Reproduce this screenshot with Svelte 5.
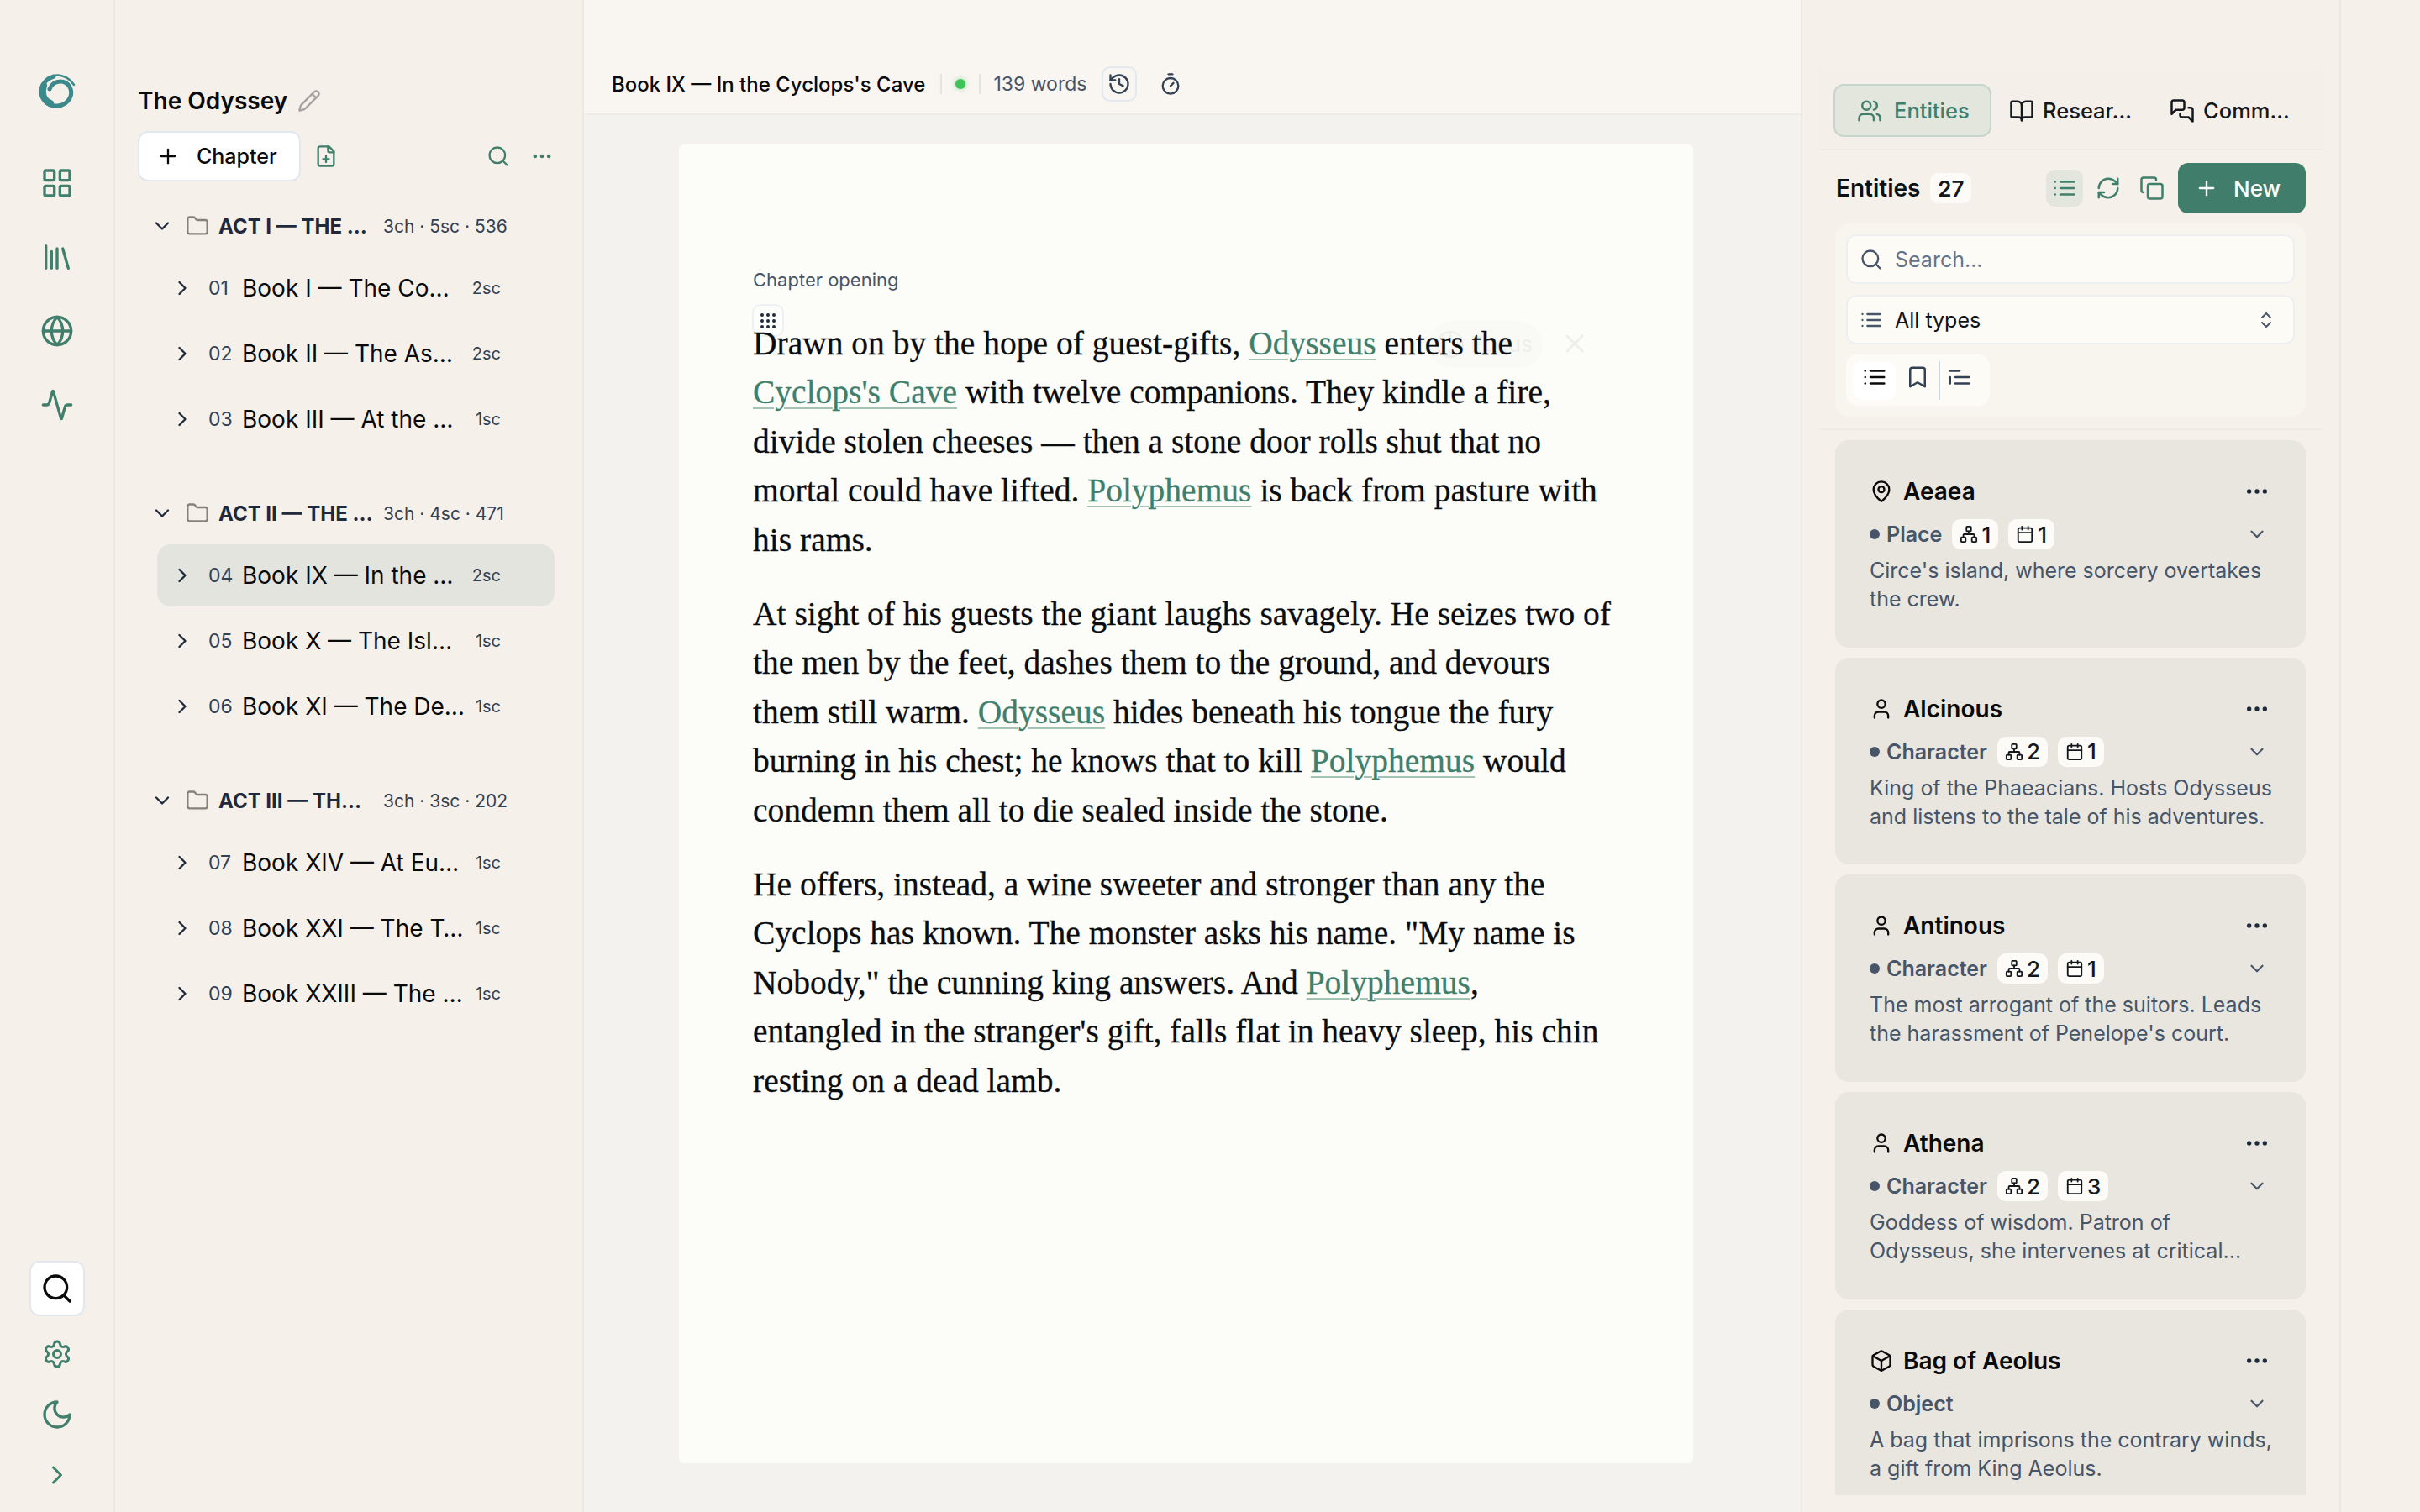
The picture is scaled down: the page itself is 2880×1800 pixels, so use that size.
<script>
  const icons = {
    grid: '<rect x="3" y="3" width="7" height="7" rx="1"/><rect x="14" y="3" width="7" height="7" rx="1"/><rect x="14" y="14" width="7" height="7" rx="1"/><rect x="3" y="14" width="7" height="7" rx="1"/>',
    library: '<path d="m16 6 4 14"/><path d="M12 6v14"/><path d="M8 8v12"/><path d="M4 4v16"/>',
    globe: '<circle cx="12" cy="12" r="10"/><path d="M12 2a14.5 14.5 0 0 0 0 20 14.5 14.5 0 0 0 0-20"/><path d="M2 12h20"/>',
    activity: '<path d="M22 12h-2.48a2 2 0 0 0-1.93 1.46l-2.35 8.36a.25.25 0 0 1-.48 0L9.24 2.18a.25.25 0 0 0-.48 0l-2.35 8.36A2 2 0 0 1 4.49 12H2"/>',
    search: '<circle cx="11" cy="11" r="8"/><path d="m21 21-4.3-4.3"/>',
    settings: '<path d="M9.671 4.136a2.34 2.34 0 0 1 4.659 0 2.34 2.34 0 0 0 3.319 1.915 2.34 2.34 0 0 1 2.33 4.033 2.34 2.34 0 0 0 0 3.831 2.34 2.34 0 0 1-2.33 4.033 2.34 2.34 0 0 0-3.319 1.915 2.34 2.34 0 0 1-4.659 0 2.34 2.34 0 0 0-3.32-1.915 2.34 2.34 0 0 1-2.33-4.033 2.34 2.34 0 0 0 0-3.831A2.34 2.34 0 0 1 6.35 6.051a2.34 2.34 0 0 0 3.319-1.915"/><circle cx="12" cy="12" r="3"/>',
    moon: '<path d="M12 3a6 6 0 0 0 9 9 9 9 0 1 1-9-9Z"/>',
    right: '<path d="m9 18 6-6-6-6"/>',
    down: '<path d="m6 9 6 6 6-6"/>',
    plus: '<path d="M5 12h14"/><path d="M12 5v14"/>',
    pencil: '<path d="M21.174 6.812a1 1 0 0 0-3.986-3.987L3.842 16.174a2 2 0 0 0-.5.83l-1.321 4.352a.5.5 0 0 0 .623.622l4.353-1.32a2 2 0 0 0 .83-.497z"/><path d="m15 5 4 4"/>',
    filePlus: '<path d="M15 2H6a2 2 0 0 0-2 2v16a2 2 0 0 0 2 2h12a2 2 0 0 0 2-2V7Z"/><path d="M14 2v4a2 2 0 0 0 2 2h4"/><path d="M9 15h6"/><path d="M12 18v-6"/>',
    dots: '<circle cx="12" cy="12" r="1"/><circle cx="19" cy="12" r="1"/><circle cx="5" cy="12" r="1"/>',
    folder: '<path d="M20 20a2 2 0 0 0 2-2V8a2 2 0 0 0-2-2h-7.9a2 2 0 0 1-1.69-.9L9.6 3.9A2 2 0 0 0 7.93 3H4a2 2 0 0 0-2 2v13a2 2 0 0 0 2 2Z"/>',
    history: '<path d="M3 12a9 9 0 1 0 9-9 9.75 9.75 0 0 0-6.74 2.74L3 8"/><path d="M3 3v5h5"/><path d="M12 7v5l4 2"/>',
    timer: '<path d="M10 2h4"/><path d="m12 14 3-3"/><circle cx="12" cy="14" r="8"/>',
    grip: '<circle cx="5" cy="5" r="1"/><circle cx="12" cy="5" r="1"/><circle cx="19" cy="5" r="1"/><circle cx="5" cy="12" r="1"/><circle cx="12" cy="12" r="1"/><circle cx="19" cy="12" r="1"/><circle cx="5" cy="19" r="1"/><circle cx="12" cy="19" r="1"/><circle cx="19" cy="19" r="1"/>',
    users: '<path d="M16 21v-2a4 4 0 0 0-4-4H6a4 4 0 0 0-4 4v2"/><circle cx="9" cy="7" r="4"/><path d="M22 21v-2a4 4 0 0 0-3-3.87"/><path d="M16 3.13a4 4 0 0 1 0 7.75"/>',
    book: '<path d="M12 7v14"/><path d="M3 18a1 1 0 0 1-1-1V4a1 1 0 0 1 1-1h5a4 4 0 0 1 4 4 4 4 0 0 1 4-4h5a1 1 0 0 1 1 1v13a1 1 0 0 1-1 1h-6a3 3 0 0 0-3 3 3 3 0 0 0-3-3z"/>',
    messages: '<path d="M14 9a2 2 0 0 1-2 2H6l-4 4V4a2 2 0 0 1 2-2h8a2 2 0 0 1 2 2z"/><path d="M18 9h2a2 2 0 0 1 2 2v11l-4-4h-6a2 2 0 0 1-2-2v-1"/>',
    list: '<path d="M3 12h.01"/><path d="M3 18h.01"/><path d="M3 6h.01"/><path d="M8 12h13"/><path d="M8 18h13"/><path d="M8 6h13"/>',
    refresh: '<path d="M3 12a9 9 0 0 1 9-9 9.75 9.75 0 0 1 6.74 2.74L21 8"/><path d="M21 3v5h-5"/><path d="M21 12a9 9 0 0 1-9 9 9.75 9.75 0 0 1-6.74-2.74L3 16"/><path d="M8 16H3v5"/>',
    copy: '<rect x="8" y="8" width="14" height="14" rx="2"/><path d="M4 16c-1.1 0-2-.9-2-2V4c0-1.1.9-2 2-2h10c1.1 0 2 .9 2 2"/>',
    updown: '<path d="m7 15 5 5 5-5"/><path d="m7 9 5-5 5 5"/>',
    bookmark: '<path d="m19 21-7-4-7 4V5a2 2 0 0 1 2-2h10a2 2 0 0 1 2 2v16z"/>',
    tree: '<path d="M3 6h9"/><path d="M8 12h13"/><path d="M8 18h13"/><path d="M3 12v6"/>',
    pin: '<path d="M20 10c0 4.993-5.539 10.193-7.399 11.799a1 1 0 0 1-1.202 0C9.539 20.193 4 14.993 4 10a8 8 0 0 1 16 0"/><circle cx="12" cy="10" r="3"/>',
    user: '<path d="M19 21v-2a4 4 0 0 0-4-4H9a4 4 0 0 0-4 4v2"/><circle cx="12" cy="7" r="4"/>',
    box: '<path d="M21 8a2 2 0 0 0-1-1.73l-7-4a2 2 0 0 0-2 0l-7 4A2 2 0 0 0 3 8v8a2 2 0 0 0 1 1.73l7 4a2 2 0 0 0 2 0l7-4A2 2 0 0 0 21 16Z"/><path d="m3.3 7 8.7 5 8.7-5"/><path d="M12 22V12"/>',
    network: '<rect x="16" y="16" width="6" height="6" rx="1"/><rect x="2" y="16" width="6" height="6" rx="1"/><rect x="9" y="2" width="6" height="6" rx="1"/><path d="M5 16v-3a1 1 0 0 1 1-1h12a1 1 0 0 1 1 1v3"/><path d="M12 12V8"/>',
    calendar: '<path d="M8 2v4"/><path d="M16 2v4"/><rect x="3" y="4" width="18" height="18" rx="2"/><path d="M3 10h18"/>',
    x: '<path d="M18 6 6 18"/><path d="m6 6 12 12"/>'
  };

  const acts = [
    { name: 'ACT I — THE …', meta: '3ch · 5sc · 536', chapters: [
      ['01', 'Book I — The Co…', '2sc'],
      ['02', 'Book II — The As…', '2sc'],
      ['03', 'Book III — At the …', '1sc']
    ] },
    { name: 'ACT II — THE …', meta: '3ch · 4sc · 471', chapters: [
      ['04', 'Book IX — In the …', '2sc', true],
      ['05', 'Book X — The Isl…', '1sc'],
      ['06', 'Book XI — The De…', '1sc']
    ] },
    { name: 'ACT III — TH…', meta: '3ch · 3sc · 202', chapters: [
      ['07', 'Book XIV — At Eu…', '1sc'],
      ['08', 'Book XXI — The T…', '1sc'],
      ['09', 'Book XXIII — The …', '1sc']
    ] }
  ];

  const entities = [
    { icon: 'pin', name: 'Aeaea', type: 'Place', rel: 1, ev: 1, desc: ["Circe's island, where sorcery overtakes", 'the crew.'] },
    { icon: 'user', name: 'Alcinous', type: 'Character', rel: 2, ev: 1, desc: ['King of the Phaeacians. Hosts Odysseus', 'and listens to the tale of his adventures.'] },
    { icon: 'user', name: 'Antinous', type: 'Character', rel: 2, ev: 1, desc: ['The most arrogant of the suitors. Leads', "the harassment of Penelope's court."] },
    { icon: 'user', name: 'Athena', type: 'Character', rel: 2, ev: 3, desc: ['Goddess of wisdom. Patron of', 'Odysseus, she intervenes at critical…'] },
    { icon: 'box', name: 'Bag of Aeolus', type: 'Object', desc: ['A bag that imprisons the contrary winds,', 'a gift from King Aeolus.'] }
  ];
</script>

{#snippet icon(name, size = 40)}
  <svg class="ic" width={size} height={size} viewBox="0 0 24 24" fill="none" stroke="currentColor" stroke-width="2" stroke-linecap="round" stroke-linejoin="round">{@html icons[name]}</svg>
{/snippet}

<div class="app">
  <nav class="rail">
    <svg class="logo" width="52" height="52" viewBox="11 12 52 52" fill="none" stroke="#3b898b" stroke-linecap="round">
      <path d="M57 31C50 20 37 17 28 22" stroke-width="2.5"/>
      <path d="M33 21C19 25 14 41 22 50C30 59 46 58 52 47C57 37 50 27 41 27C34 27 30 31 28 36" stroke-width="5"/>
      <path d="M21 32C18 40 20 49 29 53" stroke-width="8"/>
    </svg>
    <div class="rail-top">
      {#each ['grid', 'library', 'globe', 'activity'] as n}
        <span class="rail-btn">{@render icon(n)}</span>
      {/each}
    </div>
    <div class="rail-bottom">
      <span class="rail-search">{@render icon('search')}</span>
      <span class="rail-btn">{@render icon('settings', 36)}</span>
      <span class="rail-btn">{@render icon('moon')}</span>
      <span class="rail-btn">{@render icon('right', 36)}</span>
    </div>
  </nav>

  <aside class="tree-panel">
    <div class="book-title">
      <span>The Odyssey</span>
      <span class="pencil">{@render icon('pencil', 28)}</span>
    </div>
    <div class="tree-tools">
      <button class="add-chapter">{@render icon('plus', 28)}<span>Chapter</span></button>
      <span class="green">{@render icon('filePlus', 28)}</span>
      <span class="spacer"></span>
      <span class="green">{@render icon('search', 28)}</span>
      <span class="green dots">{@render icon('dots', 28)}</span>
    </div>
    {#each acts as act}
      <section class="act">
        <div class="act-row">
          <span class="act-chev">{@render icon('down', 28)}</span>
          <span class="act-folder">{@render icon('folder', 28)}</span>
          <span class="act-name">{act.name}</span>
          <span class="act-meta">{act.meta}</span>
        </div>
        {#each act.chapters as ch}
          <div class="chapter" class:selected={ch[3]}>
            <span class="ch-chev">{@render icon('right', 28)}</span>
            <span class="ch-num">{ch[0]}</span>
            <span class="ch-title">{ch[1]}</span>
            <span class="ch-sc">{ch[2]}</span>
          </div>
        {/each}
      </section>
    {/each}
  </aside>

  <main class="center">
    <header class="topbar">
      <span class="doc-title">Book IX — In the Cyclops's Cave</span>
      <span class="sep"></span>
      <span class="status"></span>
      <span class="sep last"></span>
      <span class="words">139 words</span>
      <span class="hist">{@render icon('history', 28)}</span>
      <span class="timer">{@render icon('timer', 28)}</span>
    </header>
    <div class="desk">
      <article class="paper">
        <div class="opening">Chapter opening</div>
        <div class="body">
          <span class="grip">{@render icon('grip', 24)}</span>
          <span class="ghost">
            <svg width="36" height="36" viewBox="0 0 24 24" fill="none" stroke="currentColor" stroke-width="1.5"><circle cx="12" cy="12" r="10"/><path d="M12 2v6M12 16v6"/></svg>
            <span>Focus</span>
          </span>
          <span class="ghost-x">{@render icon('x', 36)}</span>
          <p>Drawn on by the hope of guest-gifts, <a href="#odysseus">Odysseus</a> enters the<br>
            <a href="#cave">Cyclops's Cave</a> with twelve companions. They kindle a fire,<br>
            divide stolen cheeses — then a stone door rolls shut that no<br>
            mortal could have lifted. <a href="#polyphemus">Polyphemus</a> is back from pasture with<br>
            his rams.</p>
          <p>At sight of his guests the giant laughs savagely. He seizes two of<br>
            the men by the feet, dashes them to the ground, and devours<br>
            them still warm. <a href="#odysseus">Odysseus</a> hides beneath his tongue the fury<br>
            burning in his chest; he knows that to kill <a href="#polyphemus">Polyphemus</a> would<br>
            condemn them all to die sealed inside the stone.</p>
          <p>He offers, instead, a wine sweeter and stronger than any the<br>
            Cyclops has known. The monster asks his name. "My name is<br>
            Nobody," the cunning king answers. And <a href="#polyphemus">Polyphemus</a>,<br>
            entangled in the stranger's gift, falls flat in heavy sleep, his chin<br>
            resting on a dead lamb.</p>
        </div>
      </article>
    </div>
  </main>

  <aside class="side">
    <div class="tabs">
      <button class="tab active">{@render icon('users', 30)}<span>Entities</span></button>
      <button class="tab">{@render icon('book', 30)}<span>Resear…</span></button>
      <button class="tab">{@render icon('messages', 30)}<span>Comm…</span></button>
    </div>
    <div class="side-head">
      <span class="side-title">Entities</span>
      <span class="count">27</span>
      <span class="spacer"></span>
      <span class="head-btn on">{@render icon('list', 30)}</span>
      <span class="head-btn">{@render icon('refresh', 30)}</span>
      <span class="head-btn">{@render icon('copy', 30)}</span>
      <button class="new-btn">{@render icon('plus', 28)}<span>New</span></button>
    </div>
    <div class="filters">
      <div class="field">
        <span class="field-ic">{@render icon('search', 28)}</span>
        <span class="placeholder">Search...</span>
      </div>
      <div class="field">
        <span class="field-ic">{@render icon('list', 28)}</span>
        <span class="value">All types</span>
        <span class="spacer"></span>
        <span class="field-ic">{@render icon('updown', 24)}</span>
      </div>
      <div class="seg">
        <span class="seg-btn active">{@render icon('list', 30)}</span>
        <span class="seg-btn">{@render icon('bookmark', 30)}</span>
        <span class="seg-sep"></span>
        <span class="seg-btn narrow">{@render icon('tree', 30)}</span>
      </div>
    </div>
    <div class="cards">
      {#each entities as e}
        <div class="card">
          <div class="card-head">
            {@render icon(e.icon, 28)}
            <span class="card-name">{e.name}</span>
            <span class="spacer"></span>
            <span class="card-more">{@render icon('dots', 32)}</span>
          </div>
          <div class="card-meta">
            <span class="dot"></span>
            <span class="card-type">{e.type}</span>
            {#if e.rel}
              <span class="chip">{@render icon('network', 22)}{e.rel}</span>
              <span class="chip">{@render icon('calendar', 22)}{e.ev}</span>
            {/if}
            <span class="spacer"></span>
            <span class="card-chev">{@render icon('down', 26)}</span>
          </div>
          <div class="card-desc">
            {#each e.desc as line}<div>{line}</div>{/each}
          </div>
        </div>
      {/each}
    </div>
  </aside>

  <div class="strip"></div>
</div>

<style>
  :global(body) {
    margin: 0;
    background: #f5f1ea;
    font-family: Inter, "Liberation Sans", sans-serif;
    color: #0b0f14;
  }
  button {
    font-family: inherit;
    color: inherit;
    background: none;
    border: 0;
    padding: 0;
  }
  .ic {
    display: block;
    flex: none;
  }
  .spacer {
    flex: 1;
  }
  .app {
    display: flex;
    width: 2880px;
    height: 1800px;
    overflow: hidden;
  }

  /* icon rail */
  .rail {
    width: 135px;
    flex: none;
    border-right: 2px solid #ede8e1;
    display: flex;
    flex-direction: column;
    align-items: center;
    color: #3f7f6c;
  }
  .logo {
    margin-top: 82px;
    flex: none;
  }
  .rail-top {
    margin-top: 64px;
    display: flex;
    flex-direction: column;
    gap: 48px;
  }
  .rail-btn {
    height: 40px;
    display: flex;
    align-items: center;
    justify-content: center;
  }
  .rail-bottom {
    margin-top: auto;
    padding-bottom: 8px;
    display: flex;
    flex-direction: column;
    align-items: center;
  }
  .rail-bottom .rail-btn {
    height: 72px;
  }
  .rail-search {
    width: 62px;
    height: 62px;
    margin-bottom: 9px;
    border: 2px solid #e2e8f0;
    border-radius: 12px;
    background: #fff;
    color: #0a0a0a;
    display: flex;
    align-items: center;
    justify-content: center;
  }

  /* chapter tree */
  .tree-panel {
    width: 558px;
    flex: none;
    border-right: 2px solid #ede8e1;
    padding: 0 34px 0 27px;
    box-sizing: border-box;
  }
  .book-title {
    margin-top: 99px;
    height: 42px;
    display: flex;
    align-items: center;
    gap: 12px;
    font-size: 28px;
    font-weight: 600;
    color: #0a0a0a;
  }
  .pencil {
    color: #a3a29c;
  }
  .tree-tools {
    margin-top: 15px;
    height: 60px;
    display: flex;
    align-items: center;
    color: #3f7f6c;
  }
  .add-chapter {
    width: 194px;
    height: 60px;
    box-sizing: border-box;
    border: 2px solid #e2e8f0;
    border-radius: 12px;
    background: #fff;
    display: flex;
    align-items: center;
    gap: 20px;
    padding-left: 20px;
    font-size: 25px;
    font-weight: 500;
    color: #0a0a0a;
  }
  .green {
    color: #3f7f6c;
  }
  .tree-tools > .green:nth-of-type(1) {
    margin-left: 16px;
  }
  .dots {
    margin-left: 24px;
  }
  .act {
    margin-top: 24px;
    margin-bottom: 46px;
  }
  .act-row {
    height: 58px;
    display: flex;
    align-items: center;
    margin-bottom: 8px;
    position: relative;
  }
  .act-chev {
    width: 28px;
    margin-left: 15px;
    color: #1e293b;
  }
  .act-folder {
    margin-left: 14px;
    color: #85827b;
  }
  .act-name {
    margin-left: 11px;
    font-size: 24px;
    font-weight: 700;
    color: #1e293b;
    white-space: nowrap;
    width: 196px;
    overflow: hidden;
  }
  .act-meta {
    font-size: 21px;
    color: #334155;
    white-space: nowrap;
  }
  .chapter {
    height: 74px;
    margin: 0 0 4px 23px;
    padding-left: 16px;
    width: 473px;
    box-sizing: border-box;
    border-radius: 16px;
    display: flex;
    align-items: center;
  }
  .chapter.selected {
    background: #e3e4dd;
  }
  .ch-chev {
    width: 28px;
    color: #1e293b;
  }
  .ch-num {
    margin-left: 17px;
    width: 40px;
    font-size: 23px;
    color: #334155;
  }
  .ch-title {
    font-size: 28px;
    color: #0a0a0a;
    white-space: nowrap;
    width: 268px;
    overflow: hidden;
  }
  .ch-sc {
    width: 40px;
    text-align: right;
    font-size: 20px;
    color: #334155;
  }

  /* editor */
  .center {
    width: 1448px;
    flex: none;
    display: flex;
    flex-direction: column;
    min-width: 0;
  }
  .topbar {
    flex: none;
    border-bottom: 2px solid #eeebe6;
    background: #f9f6f2;
    padding: 65px 0 0 33px;
    height: 70px;
    display: flex;
    align-items: center;
    font-size: 24px;
  }
  .doc-title {
    font-weight: 500;
    color: #0a0a0a;
    white-space: nowrap;
  }
  .sep {
    width: 2px;
    height: 24px;
    margin: 0 18px;
    background: #e5e5e0;
  }
  .sep.last {
    margin-right: 15px;
  }
  .status {
    width: 12px;
    height: 12px;
    margin: 0 -2px;
    border-radius: 50%;
    background: #3fc45a;
    box-shadow: 0 0 6px #3fc45a88;
  }
  .words {
    font-size: 23px;
    color: #475569;
  }
  .hist {
    margin-left: 18px;
    width: 42px;
    height: 42px;
    box-sizing: border-box;
    border: 2px solid #e2e8f0;
    border-radius: 10px;
    display: flex;
    align-items: center;
    justify-content: center;
    color: #334155;
  }
  .timer {
    margin-left: 26px;
    color: #334155;
  }
  .desk {
    flex: 1;
    background: #f4f2ee;
    padding: 35px 0 0 113px;
    min-height: 0;
  }
  .paper {
    width: 1207px;
    height: 1570px;
    box-sizing: border-box;
    background: #fcfcf8;
    border-radius: 6px;
    padding: 146px 88px 0;
  }
  .opening {
    font-size: 22px;
    line-height: 30px;
    color: #475569;
  }
  .body {
    position: relative;
    margin-top: 32px;
    font-family: "Liberation Serif", serif;
    font-size: 39.5px;
    line-height: 58.4px;
    color: #0a0d10;
    white-space: nowrap;
    -webkit-text-stroke: 0.3px currentColor;
  }
  .body p {
    position: relative;
    margin: 0 0 30px;
  }
  .body a {
    color: #3f7f6c;
    text-decoration: underline;
    text-decoration-color: #a4c2b6;
    text-decoration-thickness: 2px;
    text-underline-offset: 5px;
  }
  .grip {
    position: absolute;
    left: -1px;
    top: -18px;
    width: 38px;
    height: 39px;
    box-sizing: border-box;
    background: #fdfdfb;
    border: 2px solid #eef1f4;
    border-radius: 10px;
    display: flex;
    align-items: center;
    justify-content: center;
    color: #1e293b;
  }
  .ghost {
    position: absolute;
    left: 804px;
    top: 2px;
    width: 136px;
    height: 56px;
    border-radius: 28px;
    background: #f9faf6;
    display: flex;
    align-items: center;
    gap: 6px;
    padding-left: 8px;
    box-sizing: border-box;
    color: #eeefeb;
    font-family: Inter, sans-serif;
    font-size: 26px;
    -webkit-text-stroke: 0;
  }
  .ghost-x {
    position: absolute;
    left: 960px;
    top: 11px;
    color: #eeefeb;
  }

  /* entities panel */
  .side {
    width: 641px;
    flex: none;
    box-sizing: border-box;
    border-left: 2px solid #ede8e1;
    padding: 83px 21px 0 20px;
    display: flex;
    flex-direction: column;
  }
  .tabs {
    height: 77px;
    flex: none;
    border-bottom: 2px solid #efeae3;
    background: #f4f0e9;
    display: flex;
    align-items: flex-start;
    padding: 17px 0 0 17px;
  }
  .tab {
    height: 63px;
    display: flex;
    align-items: center;
    gap: 10px;
    font-size: 25.5px;
    font-weight: 500;
    color: #14181d;
    padding: 0 16px 0 18px;
    white-space: nowrap;
    box-sizing: border-box;
    border: 2px solid transparent;
  }
  .tab.active {
    width: 188px;
    padding: 0 0 0 26px;
    gap: 14px;
    border-color: #c7d6ca;
    border-radius: 12px;
    background: #e2e6dd;
    color: #3f7f6c;
    margin-right: 1px;
  }
  .tab:last-child {
    margin-left: 7px;
  }
  .side-head {
    height: 60px;
    flex: none;
    margin: 15px 19px 0 20px;
    display: flex;
    align-items: center;
  }
  .side-title {
    font-size: 28px;
    font-weight: 600;
    color: #0c1116;
  }
  .count {
    margin-left: 12px;
    width: 49px;
    height: 36px;
    border-radius: 10px;
    background: #fcfbf7;
    display: flex;
    align-items: center;
    justify-content: center;
    font-size: 26px;
    font-weight: 600;
    color: #14181d;
  }
  .head-btn {
    width: 44px;
    height: 44px;
    border-radius: 10px;
    margin-right: 8px;
    display: flex;
    align-items: center;
    justify-content: center;
    color: #3f7f6c;
  }
  .head-btn.on {
    background: #e2e6dd;
  }
  .new-btn {
    width: 152px;
    height: 60px;
    margin-left: 1px;
    border-radius: 12px;
    background: #407d6b;
    color: #fdfdfb;
    display: flex;
    align-items: center;
    gap: 18px;
    padding-left: 20px;
    font-size: 26px;
    font-weight: 500;
  }
  .filters {
    flex: none;
    height: 230px;
    box-sizing: border-box;
    margin: 12px 19px 0 19px;
    border-radius: 16px;
    background: #f8f4ee;
    padding: 13px 13px;
    display: flex;
    flex-direction: column;
  }
  .field {
    flex: none;
    height: 59px;
    margin-bottom: 13px;
    box-sizing: border-box;
    border: 2px solid #edeff2;
    border-radius: 12px;
    background: #fdfbf6;
    padding: 0 14px;
    display: flex;
    align-items: center;
    font-size: 25px;
  }
  .field-ic {
    color: #475569;
    margin-right: 14px;
  }
  .field-ic:last-child {
    margin-right: 6px;
  }
  .placeholder {
    color: #64748b;
  }
  .value {
    color: #0f1318;
  }
  .seg {
    width: 171px;
    height: 62px;
    box-sizing: border-box;
    border-radius: 14px;
    background: #fdfbf6;
    display: flex;
    align-items: center;
    padding: 0 8px;
    margin-top: -1px;
  }
  .seg-btn {
    width: 51px;
    height: 46px;
    box-sizing: border-box;
    padding-bottom: 8px;
    border-radius: 12px;
    display: flex;
    align-items: center;
    justify-content: center;
    color: #334155;
  }
  .seg-btn.active {
    background: #fff;
    color: #0a0a0a;
  }
  .seg-btn.narrow {
    width: 46px;
  }
  .seg-sep {
    width: 2px;
    height: 46px;
    background: #cbd5e1;
  }
  .cards {
    flex: 1;
    min-height: 0;
    border-top: 2px solid #efeae3;
    margin: 14px 0 20px;
    padding: 12px 19px 0 19px;
    overflow: hidden;
    display: flex;
    flex-direction: column;
    gap: 12px;
  }
  .card {
    flex: none;
    height: 246.7px;
    box-sizing: border-box;
    border-radius: 16px;
    background: #e9e6df;
    padding: 43px 42px 0 41px;
  }
  .card-head {
    height: 36px;
    display: flex;
    align-items: center;
    color: #0a0a0a;
  }
  .card-name {
    margin-left: 12px;
    font-size: 28px;
    font-weight: 600;
  }
  .card-more {
    color: #1e293b;
  }
  .card-meta {
    margin-top: 15px;
    height: 36px;
    display: flex;
    align-items: center;
  }
  .dot {
    width: 12px;
    height: 12px;
    border-radius: 50%;
    background: #475569;
    margin-right: 8px;
  }
  .card-type {
    font-size: 25px;
    font-weight: 600;
    color: #475569;
  }
  .chip {
    margin-left: 12px;
    height: 36px;
    padding: 0 9px;
    border-radius: 10px;
    background: #fcfbf7;
    display: flex;
    align-items: center;
    gap: 4px;
    font-size: 26px;
    font-weight: 500;
    color: #14181d;
  }
  .card-chev {
    color: #475569;
    margin-right: 3px;
  }
  .card-desc {
    margin-top: 8px;
    font-size: 25px;
    line-height: 34px;
    color: #475569;
    white-space: nowrap;
  }
  .strip {
    flex: 1;
    border-left: 2px solid #ede8e1;
  }
</style>
